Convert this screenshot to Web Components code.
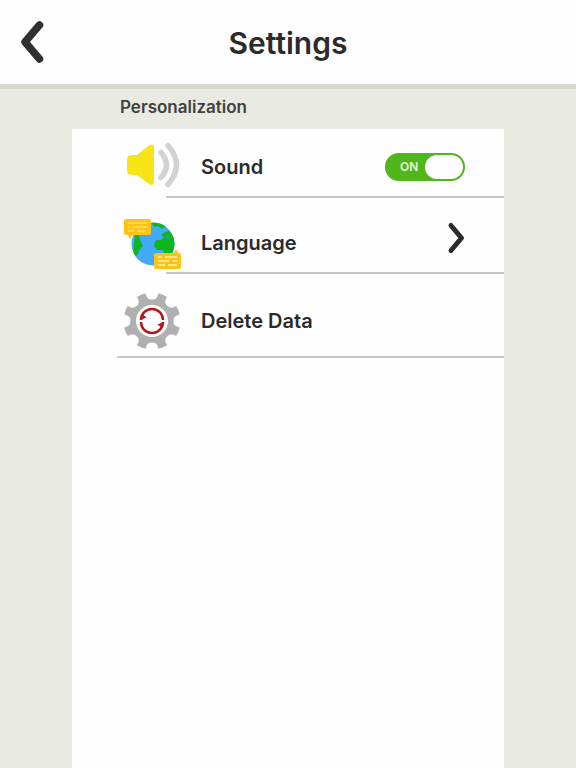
<!DOCTYPE html>
<html lang="en">
<head>
<meta charset="utf-8">
<meta name="viewport" content="width=device-width, initial-scale=1">
<title>Settings</title>
<style>
  body {
    margin: 0;
    background-color: #e9eae2;
    color: #2b2b2b;
    font-family: Inter, "Noto Sans", sans-serif;
    font-weight: 600;
  }

  settings-page {
    --primary-color: #50b61b;
    --line-color: #c6c6c6;
    --panel-color: #fefefe;
  }
</style>
</head>
<body>
<settings-page>
  <page-header slot="header">Settings</page-header>
  <settings-section heading="Personalization">
    <toggle-row label="Sound" class="first" checked>
      <svg slot="icon" viewBox="0 0 58 58" width="58" height="58" aria-hidden="true">
        <path d="M9 17H14L25 8Q31 4 31 10V43Q31 49 26 46L14 37H9Q4 37 4 32V22Q4 17 9 17Z" fill="#f8e417"/>
        <path d="M38 14.500Q49 27 38 39.500M45 7.500Q62 27 45 46.500" fill="none" stroke="#d2d2d2" stroke-width="5.500" stroke-linecap="round"/>
      </svg>
    </toggle-row>
    <link-row label="Language" arrow>
      <svg slot="icon" viewBox="0 0 58 58" width="58" height="58" aria-hidden="true">
        <circle cx="30" cy="30" r="21.500" fill="#43aaf8"/>
        <path d="M12 21H16L17 26 20 32 16 36 15 40 13 42Q10 39 10.500 34Z" fill="#0eb51c"/>
        <path d="M28 9Q37 8 43 13L39 15 35 12 32 13Z" fill="#0eb51c"/>
        <path d="M31 32Q31 28 34 26L38 26 41 23 38 21 42 18 46 17Q52 23 51.500 31L50 38 42 42 40 36 34 36Z" fill="#0eb51c"/>
        <path d="M41 22L43 21 47 25 44 26Z" fill="#299f88"/>
        <path d="M3 5H26Q28 5 28 7V19Q28 21 26 21H10L7 25 5 21H3Q1 21 1 19V7Q1 5 3 5Z" fill="#fdc315"/>
        <path d="M33 39H51L53 35 55 39H56Q58 39 58 41V53Q58 55 56 55H33Q31 55 31 53V41Q31 39 33 39Z" fill="#fdc315"/>
        <path d="M5 9H24M5 13H7M10 13H24M5 17H11M14 17H22" stroke="#ffdd62" stroke-width="1.500"/>
        <path d="M35 43H39M42 43H54M35 47H46M50 47H54M35 51H42M45 51H54" stroke="#ffefb4" stroke-width="1.500"/>
      </svg>
    </link-row>
    <link-row label="Delete Data" class="last">
      <svg slot="icon" viewBox="-29 -29 58 58" width="58" height="58" aria-hidden="true">
        <defs>
          <path id="notch" d="M-8 -32L-5.500 -25Q-4.500 -21.500 0 -21.500Q4.500 -21.500 5.500 -25L8 -32Z" fill="#fefefe"/>
        </defs>
        <circle r="28.500" fill="#b0b0b0"/>
        <use href="#notch"/>
        <use href="#notch" transform="rotate(45)"/>
        <use href="#notch" transform="rotate(90)"/>
        <use href="#notch" transform="rotate(135)"/>
        <use href="#notch" transform="rotate(180)"/>
        <use href="#notch" transform="rotate(225)"/>
        <use href="#notch" transform="rotate(270)"/>
        <use href="#notch" transform="rotate(315)"/>
        <circle r="16" fill="#fefefe"/>
        <path d="M-11 -1A11 11 0 0 1 11 -1M11 1A11 11 0 0 1 -11 1" fill="none" stroke="#b5161b" stroke-width="2.500"/>
        <path d="M-10 -7L-12 -1L-5.500 -3.500ZM10 7L12 1L5.500 3.500Z" fill="#b5161b"/>
      </svg>
    </link-row>
  </settings-section>
</settings-page>

<script>
// Shared by every kind of row in a section
const rowStyles = `
  :host {
    display: block;
    padding-top: 16px;
  }

  :host(.first) {
    padding-top: 9px;
  }

  :host(.last) {
    padding-top: 18px;
  }

  .row {
    display: flex;
    align-items: center;
    box-sizing: border-box;
    width: 100%;
    height: 58px;
    padding: 0 39px 0 51px;
    border: 0;
    background: none;
    color: inherit;
    font: inherit;
    font-size: 20px;
    line-height: 24px;
    text-align: left;
    cursor: pointer;
  }

  .icon {
    display: block;
    flex: none;
    width: 58px;
    height: 58px;
    margin-right: 20px;
  }

  .text {
    flex: 1;
  }

  .line {
    height: 2px;
    margin-left: 94px;
    background-color: var(--line-color, #ccc);
  }

  :host(.last) .line {
    margin-top: 6px;
    margin-left: 45px;
  }
`;

// Page shell: header on top, sections below
class SettingsPage extends HTMLElement {
  constructor() {
    super();
    this.attachShadow({ mode: 'open' });
    this.shadowRoot.innerHTML = `
      <style>
        :host {
          display: flex;
          flex-direction: column;
          min-height: 100vh;
        }

        main {
          display: flex;
          flex: 1;
          flex-direction: column;
          width: 75%;
          margin: 0 auto;
        }
      </style>
      <slot name="header"></slot>
      <main><slot></slot></main>
    `;
  }
}

// Title bar with a back button
class PageHeader extends HTMLElement {
  constructor() {
    super();
    this.attachShadow({ mode: 'open' });
    this.shadowRoot.innerHTML = `
      <style>
        :host {
          display: grid;
          grid-template-columns: 64px 1fr 64px;
          align-items: center;
          height: 84px;
          background-color: var(--panel-color, #fff);
          border-bottom: 5px solid #d6d7cd;
        }

        button {
          display: flex;
          justify-content: center;
          padding: 0;
          border: 0;
          background: none;
          color: inherit;
          cursor: pointer;
        }

        h1 {
          margin: 0;
          padding-top: 2px;
          font-size: 30px;
          font-weight: inherit;
          line-height: 40px;
          text-align: center;
        }
      </style>
      <button type="button" aria-label="Back">
        <svg viewBox="0 0 24 44" width="24" height="44" aria-hidden="true">
          <path d="M19.500 5L5 22L19.500 39" fill="none" stroke="#303030" stroke-width="7.500" stroke-linecap="round" stroke-linejoin="round"/>
        </svg>
      </button>
      <h1><slot></slot></h1>
    `;
  }
}

// Heading and a white panel that fills the remaining height
class SettingsSection extends HTMLElement {
  constructor() {
    super();
    this.attachShadow({ mode: 'open' });
    this.shadowRoot.innerHTML = `
      <style>
        :host {
          display: flex;
          flex: 1;
          flex-direction: column;
        }

        h2 {
          margin: 0;
          padding: 6px 48px 10px;
          color: #414141;
          font-size: 17px;
          font-weight: inherit;
          line-height: 24px;
        }

        .panel {
          flex: 1;
          background-color: var(--panel-color, #fff);
        }
      </style>
      <h2></h2>
      <div class="panel"><slot></slot></div>
    `;
    this.shadowRoot.querySelector('h2').textContent = this.getAttribute('heading');
  }
}

// Row with an on/off switch
class ToggleRow extends HTMLElement {
  constructor() {
    super();
    this.attachShadow({ mode: 'open' });
    this.shadowRoot.innerHTML = `
      <style>
        ${rowStyles}

        .switch {
          display: grid;
          align-items: center;
          width: 80px;
          height: 28px;
        }

        .switch > * {
          grid-area: 1 / 1;
        }

        input {
          display: flex;
          appearance: none;
          box-sizing: border-box;
          width: 80px;
          height: 28px;
          margin: 0;
          padding: 0;
          border: 2px solid #aaa;
          border-radius: 14px;
          background-color: #aaa;
          cursor: pointer;
        }

        input::before {
          content: "";
          width: 38px;
          height: 24px;
          border-radius: 12px;
          background-color: #fefefe;
        }

        input:checked {
          justify-content: flex-end;
          border-color: var(--primary-color);
          background-color: var(--primary-color);
        }

        .state {
          padding: 0 15px;
          color: #e6f7dc;
          font-size: 12px;
          line-height: 16px;
          pointer-events: none;
        }
      </style>
      <div class="row">
        <slot class="icon" name="icon"></slot>
        <label class="text" for="toggle"></label>
        <div class="switch">
          <input id="toggle" type="checkbox" role="switch">
          <span class="state" aria-hidden="true"></span>
        </div>
      </div>
      <div class="line"></div>
    `;
    this.shadowRoot.querySelector('label').textContent = this.getAttribute('label');
    this.input = this.shadowRoot.querySelector('input');
    this.input.checked = this.hasAttribute('checked');
    this.input.addEventListener('change', () => this.update());
    this.update();
  }

  update() {
    const state = this.shadowRoot.querySelector('.state');
    state.textContent = this.input.checked ? 'ON' : 'OFF';
    state.style.textAlign = this.input.checked ? 'left' : 'right';
  }
}

// Row that opens something, with an optional arrow
class LinkRow extends HTMLElement {
  constructor() {
    super();
    this.attachShadow({ mode: 'open' });
    this.shadowRoot.innerHTML = `
      <style>
        ${rowStyles}

        .arrow {
          display: none;
          align-self: flex-start;
          margin-top: 7px;
        }

        :host([arrow]) .arrow {
          display: block;
        }
      </style>
      <button class="row" type="button">
        <slot class="icon" name="icon"></slot>
        <span class="text"></span>
        <svg class="arrow" viewBox="0 0 18 34" width="18" height="34" aria-hidden="true">
          <path d="M4 4.500L14.500 17L4 29.500" fill="none" stroke="#2b2b2b" stroke-width="5" stroke-linecap="round" stroke-linejoin="round"/>
        </svg>
      </button>
      <div class="line"></div>
    `;
    this.shadowRoot.querySelector('.text').textContent = this.getAttribute('label');
  }
}

// Register custom elements
customElements.define('settings-page', SettingsPage);
customElements.define('page-header', PageHeader);
customElements.define('settings-section', SettingsSection);
customElements.define('toggle-row', ToggleRow);
customElements.define('link-row', LinkRow);
</script>
</body>
</html>
